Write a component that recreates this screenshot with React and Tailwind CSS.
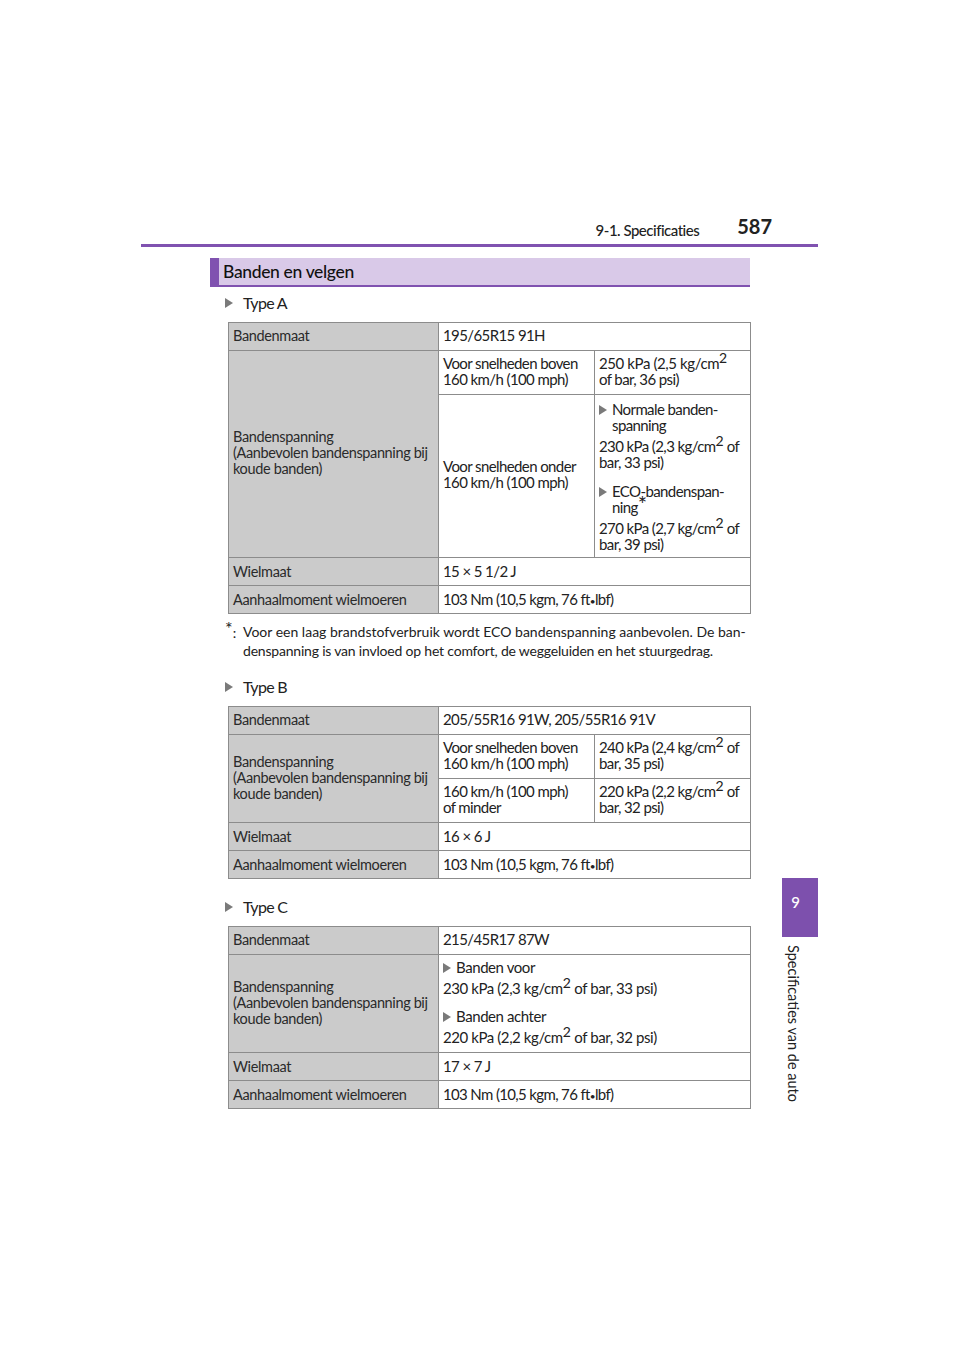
const font = { fontFamily: '"Lato", "Liberation Sans", sans-serif' }

function Arrow({ className = '' }) {
  return (
    <svg viewBox="0 0 8 10" className={`h-[10px] w-[8px] shrink-0 fill-[#7a7a7a] ${className}`}>
      <path d="M0 0 L8 5 L0 10 Z" />
    </svg>
  )
}

function Sup({ children }) {
  return <span className="relative -top-[6px] text-[14px] leading-none tracking-normal">{children}</span>
}

function TypeLabel({ children, className = '' }) {
  return (
    <div className={`flex h-[20px] items-center pl-[15px] text-[16px] tracking-[-0.7px] text-[#222] ${className}`}>
      <Arrow />
      <span className="ml-[10px]">{children}</span>
    </div>
  )
}

function Head({ children, rowSpan, className = 'pb-[2px]' }) {
  return (
    <td rowSpan={rowSpan} className={`w-[211px] border border-[#8c8c8c] bg-[#cbcbcb] pl-[4px] align-middle text-[14.5px] leading-[16px] tracking-[-0.35px] text-[#2a2a2a] ${className}`}>
      {children}
    </td>
  )
}

function Cell({ children, colSpan, className = 'pb-[4px]' }) {
  return (
    <td colSpan={colSpan} className={`border border-[#8c8c8c] pl-[4px] align-middle text-[15px] leading-[16px] tracking-[-0.6px] text-[#222] ${className}`}>
      {children}
    </td>
  )
}

function Tire() {
  return (
    <>
      Bandenspanning
      <br />
      <span className="tracking-[-0.38px]">(Aanbevolen bandenspanning bij</span>
      <br />
      koude banden)
    </>
  )
}

function Bullet({ children, className = '' }) {
  return (
    <div className={`flex items-start ${className}`}>
      <Arrow className="mr-[5px] mt-[4px]" />
      <div>{children}</div>
    </div>
  )
}

function Footer({ wheel }) {
  return (
    <>
      <tr className="h-[28px]">
        <Head className="pb-0">Wielmaat</Head>
        <Cell colSpan={2} className="pb-[2px]">{wheel}</Cell>
      </tr>
      <tr className="h-[28px]">
        <Head className="pb-0">Aanhaalmoment wielmoeren</Head>
        <Cell colSpan={2} className="pb-0">
          <span className="tracking-[-0.65px]">103 Nm (10,5 kgm, 76 ft<span className="text-[10px]">•</span>lbf)</span>
        </Cell>
      </tr>
    </>
  )
}

function SpecTable({ children }) {
  return (
    <table className="ml-[18px] w-[522px] table-fixed border-collapse">
      <colgroup>
        <col className="w-[210px]" />
        <col className="w-[156px]" />
        <col className="w-[156px]" />
      </colgroup>
      <tbody>{children}</tbody>
    </table>
  )
}

export default function App() {
  return (
    <div style={font} className="h-[1358px] w-[960px] overflow-hidden bg-white">
      <header className="ml-[141px] flex h-[247px] w-[677px] items-end justify-end border-b-[3px] border-[#8052b0] pb-[3px] pr-[46px]">
        <span className="text-[15px] font-medium tracking-[-0.5px] text-[#222]">9-1. Specificaties</span>
        <span className="ml-[38px] text-[20px] font-bold leading-[30px] text-[#222]">587</span>
      </header>

      <div className="flex">
        <main className="ml-[210px] w-[540px] pt-[11px]">
          <h2 className="flex h-[29px] items-center border-b-2 border-l-[9px] border-[#8052b0] bg-[#d9c9e8] pl-[4px] pt-[1px] text-[17.5px] font-medium tracking-[-0.35px] text-[#111]">
            Banden en velgen
          </h2>

          <TypeLabel className="mt-[6px]">Type A</TypeLabel>
          <div className="mt-[9px]">
            <SpecTable>
              <tr className="h-[28px]">
                <Head>Bandenmaat</Head>
                <Cell colSpan={2}>195/65R15 91H</Cell>
              </tr>
              <tr className="h-[44px]">
                <Head rowSpan={2}><Tire /></Head>
                <Cell>Voor snelheden boven<br />160 km/h (100 mph)</Cell>
                <Cell><span className="tracking-[-0.4px]">250 kPa (2,5 kg/cm</span><Sup>2</Sup><br />of bar, 36 psi)</Cell>
              </tr>
              <tr className="h-[163px]">
                <Cell>Voor snelheden onder<br />160 km/h (100 mph)</Cell>
                <Cell>
                  <div className="mt-[4px]">
                    <Bullet>Normale banden-<br />spanning</Bullet>
                    <div className="mt-[5px]">230 kPa (2,3 kg/cm<Sup>2</Sup> of<br />bar, 33 psi)</div>
                    <Bullet className="mt-[13px]">
                      ECO-bandenspan-<br />ning<span className="relative -top-[1px] text-[22px] leading-[0]">*</span>
                    </Bullet>
                    <div className="mt-[5px]">270 kPa (2,7 kg/cm<Sup>2</Sup> of<br />bar, 39 psi)</div>
                  </div>
                </Cell>
              </tr>
              <Footer wheel="15 × 5 1/2 J" />
            </SpecTable>
          </div>

          <div className="mt-[8px] flex pl-[15px] text-[14px] leading-[19px] text-[#222]">
            <span className="w-[18px] shrink-0"><span className="relative -top-[3px] text-[18px] leading-none">*</span>:</span>
            <p className="whitespace-nowrap">
              Voor een laag brandstofverbruik wordt ECO bandenspanning aanbevolen. De ban-<br />
              <span className="tracking-[-0.2px]">denspanning is van invloed op het comfort, de weggeluiden en het stuurgedrag.</span>
            </p>
          </div>

          <TypeLabel className="mt-[17px]">Type B</TypeLabel>
          <div className="mt-[9px]">
            <SpecTable>
              <tr className="h-[28px]">
                <Head>Bandenmaat</Head>
                <Cell colSpan={2}>205/55R16 91W, 205/55R16 91V</Cell>
              </tr>
              <tr className="h-[44px]">
                <Head rowSpan={2}><Tire /></Head>
                <Cell>Voor snelheden boven<br />160 km/h (100 mph)</Cell>
                <Cell>240 kPa (2,4 kg/cm<Sup>2</Sup> of<br />bar, 35 psi)</Cell>
              </tr>
              <tr className="h-[44px]">
                <Cell>160 km/h (100 mph)<br />of minder</Cell>
                <Cell>220 kPa (2,2 kg/cm<Sup>2</Sup> of<br />bar, 32 psi)</Cell>
              </tr>
              <Footer wheel="16 × 6 J" />
            </SpecTable>
          </div>

          <TypeLabel className="mt-[18px]">Type C</TypeLabel>
          <div className="mt-[9px]">
            <SpecTable>
              <tr className="h-[28px]">
                <Head>Bandenmaat</Head>
                <Cell colSpan={2}>215/45R17 87W</Cell>
              </tr>
              <tr className="h-[98px]">
                <Head><Tire /></Head>
                <Cell colSpan={2}>
                  <div className="tracking-[-0.42px]">
                    <Bullet>Banden voor</Bullet>
                    <div className="mt-[5px]">230 kPa (2,3 kg/cm<Sup>2</Sup> of bar, 33 psi)</div>
                    <Bullet className="mt-[12px]">Banden achter</Bullet>
                    <div className="mt-[5px]">220 kPa (2,2 kg/cm<Sup>2</Sup> of bar, 32 psi)</div>
                  </div>
                </Cell>
              </tr>
              <Footer wheel="17 × 7 J" />
            </SpecTable>
          </div>
        </main>

        <aside className="ml-[32px] mt-[631px] flex w-[36px] flex-col">
          <div className="flex h-[59px] w-[36px] items-center justify-center bg-[#7d50ad] pb-[10px] pr-[9px] text-[15px] font-medium text-white">9</div>
          <div className="ml-[1px] mt-[8px] self-start text-[14.5px] leading-[20px] text-[#222] [writing-mode:vertical-rl]">Specificaties van de auto</div>
        </aside>
      </div>
    </div>
  )
}
